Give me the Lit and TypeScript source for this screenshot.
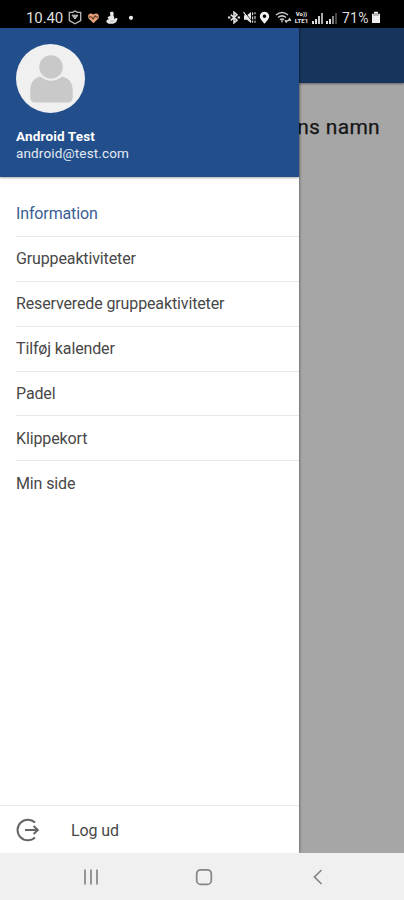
import { LitElement, html, css } from "lit";
import { customElement, property } from "lit/decorators.js";

@customElement("status-bar")
class StatusBar extends LitElement {
  static styles = css`
    :host { display: flex; height: 28px; box-sizing: border-box; padding: 7px 23px 0 26px; background: #000; color: #dedede; font: 400 14px/21px Roboto, sans-serif; justify-content: space-between; }
    .side { display: flex; align-items: center; height: 21px; }
    .time { width: 42px; font-size: 15px; letter-spacing: -0.1px; padding-top: 1px; }
    svg { display: block; flex: none; }
    .gap { margin-left: 5px; }
    .gap-s { margin-left: 3px; }
    .pct { width: 29px; margin-left: 5px; padding-top: 1px; letter-spacing: 0.2px; white-space: nowrap; }
    .lte { width: 15px; margin-left: 2px; display: flex; flex-direction: column; align-items: center; font-size: 6px; line-height: 6.5px; font-weight: 900; }
  `;
  bars(dim: boolean) {
    return html`<svg class="gap-s" width="11" height="12" viewBox="0 0 11 12">
      <path d="M0 9h2v3H0zM3 7h2v5H3z" fill="#ddd" />
      <path d="M6 4h2v8H6z" fill=${dim ? "#888" : "#ccc"} />
      <path d="M9 1h2v11H9z" fill=${dim ? "#484848" : "#aaa"} />
    </svg>`;
  }
  render() {
    return html`
      <div class="side">
        <span class="time">10.40</span>
        <svg width="14" height="15" viewBox="0 0 14 15" fill="none" stroke="#bdbdbd" stroke-width="1.3">
          <path d="M1.3 2.4H4.5L7 1l2.5 1.4h3.2v8.2L7 13.8 1.3 10.6z" /><path d="M4 5.2h6L7 9z" fill="#aaa" stroke-width="1" />
        </svg>
        <svg class="gap" width="13" height="12" viewBox="0 0 13 12">
          <path d="M6.5 11.2 1.6 6.5C-.6 3.8 3-.8 6.5 2.6 10-.8 13.6 3.8 11.4 6.5z" fill="#e5a077" />
          <path d="M1.4 5h3.2l1.5 2 2-3.2L9.2 5h2.4" fill="none" stroke="#5a3423" stroke-width="1.1" />
        </svg>
        <svg class="gap" width="14" height="14" viewBox="0 0 14 14" fill="#e8e8e8">
          <path d="M5 1.2 7.4.6 8.8 2 8.4 4.6 9.2 6.3v1.9l2-1.4 1.4.9-1.5 3.5-3 1.6H3.6L1.3 11l.6-2.2 2-.4L2.6 6.7l1-1.2 1.7-.6z" />
          <path d="m5 9.6 1.8.9 2.4-.8" stroke="#888" fill="none" stroke-width=".6" />
        </svg>
        <svg width="24" height="12" viewBox="0 0 24 12"><circle cx="12" cy="5.8" r="2.1" fill="#eee" /></svg>
      </div>
      <div class="side">
        <svg width="12" height="13" viewBox="0 0 12 13" fill="none" stroke="#e0e0e0" stroke-width="1.6">
          <path d="m2.8 3.6 6.2 5.6-3 2.6V1.2l3 2.6-6.2 5.6" /><path d="M0 6.5h2.4M9.6 6.5H12" stroke-width="2" />
        </svg>
        <svg class="gap-s" width="13" height="13" viewBox="0 0 13 13">
          <path d="M1 4.3h3L8 1v11L4 8.7H1z" fill="#e8e8e8" /><path d="M.6 1.2 8 10.8" stroke="#e8e8e8" stroke-width="1.3" /><path d="M1.9 1.2 8.4 9.6" stroke="#000" stroke-width=".7" />
          <path d="M9.6 1.3v3M9.6 5.6v2.8M9.6 9.5v2.3M12 1.3v2M12 5v3.2M12 9.7v2" stroke="#ccc" stroke-width="1.2" />
        </svg>
        <svg class="gap-s" width="11" height="13" viewBox="0 0 11 13"><path fill-rule="evenodd" d="M5.5.7A4.7 4.7 0 0 0 .8 5.2C.8 8.2 5.5 12.6 5.5 12.6S10.2 8.2 10.2 5.2A4.7 4.7 0 0 0 5.5.7zm0 2.7a1.8 1.8 0 1 1 0 3.6 1.8 1.8 0 0 1 0-3.6z" fill="#f2f2f2" /></svg>
        <svg class="gap" width="17" height="13" viewBox="0 0 17 13" fill="none" stroke="#ccc" stroke-width="1.5">
          <path d="M1 4q6-4.8 12 0M3 6.5q4-3.3 8 0M5 8.8q2-1.7 4 0M7 9.2v2" /><path d="m10 9.2 1.3 1.8 1.3-1.8M13.2 10l1.3-2 1.3 2" stroke-width="1.5" />
        </svg>
        <span class="lte"><span>Vo))</span><span>LTE1</span></span>
        ${this.bars(false)}${this.bars(true)}
        <span class="pct">71%</span>
        <svg width="10" height="13" viewBox="0 0 10 13"><path d="M3 .8h4v1.7H3zM1 2.7h8v9.4H1z" fill="#eee" /><path d="M2 4h6" stroke="#888" /></svg>
      </div>`;
  }
}

@customElement("drawer-header")
class DrawerHeader extends LitElement {
  static styles = css`
    :host { display: block; box-sizing: border-box; height: 149px; padding: 16px 16px 0; background: #224f8b; color: #fff; font: 13.5px/16.5px Roboto, sans-serif; box-shadow: 0 1px 2px #0005; }
    svg { display: block; }
    .name { margin-top: 15px; font-weight: 700; letter-spacing: 0.16px; }
    .name, .mail { white-space: nowrap; }
    .mail { color: #e4eaf3; letter-spacing: 0.15px; }
  `;
  render() {
    return html`<svg width="70" height="69" viewBox="0 0 70 69">
        <circle cx="34.5" cy="34.5" r="34.5" fill="#f0f0f0" />
        <circle cx="35" cy="23" r="11.8" fill="#c9c9c9" />
        <path d="M24 32.5Q35 41 46 32.5Q56.5 35 56.5 46V53Q56.5 58.5 51 58.5H19Q14 58.5 14 53V46Q14 35 24 32.5z" transform="translate(.2)" fill="#c9c9c9" />
      </svg>
      <div class="name">Android Test</div><div class="mail">android@test.com</div>`;
  }
}

@customElement("drawer-menu")
class DrawerMenu extends LitElement {
  @property({ type: Array }) items: string[] = [];
  static styles = css`
    :host { display: block; flex: 1; padding: 15px 0 0 16px; font: 16px/20px Roboto, sans-serif; letter-spacing: -0.13px; color: #484848; }
    .row { box-sizing: border-box; height: 44.9px; display: flex; align-items: center; padding-top: 0.8px; border-bottom: 1px solid #e9e9e9; }
    .row:last-child { border-color: transparent; }
    .active { color: #3c5d94; }
  `;
  render() {
    return this.items.map((t, i) => html`<div class="row ${i === 0 ? "active" : ""}">${t}</div>`);
  }
}

@customElement("navigation-bar")
class NavigationBar extends LitElement {
  static styles = css`
    :host { display: flex; height: 47px; background: #f0f0f0; align-items: center; padding-left: 83px; }
    svg { display: block; fill: none; stroke: #858585; stroke-width: 1.7; }
    .home { margin: 0 99px 0 96px; }
  `;
  render() {
    return html`
      <svg width="16" height="18" viewBox="0 0 16 18"><path d="M2 1.5v15M8 1.5v15M14 1.5v15" /></svg>
      <svg class="home" width="18" height="18" viewBox="0 0 18 18"><rect x="1.7" y="1.8" width="14.6" height="14.6" rx="4" /></svg>
      <svg width="12" height="18" viewBox="0 0 12 18"><path d="M9.5 2 2.5 9l7 7" /></svg>`;
  }
}

@customElement("app-root")
class AppRoot extends LitElement {
  static styles = css`
    :host { display: flex; flex-direction: column; width: 404px; height: 900px; overflow: hidden; background: #fff; }
    .body { flex: 1; display: flex; min-height: 0; }
    .drawer { width: 299px; display: flex; flex-direction: column; background: #fff; z-index: 1; box-shadow: 0 0 3px #0009; clip-path: inset(0 -6px 0 0); }
    .page { flex: 1; min-width: 0; background: #a6a6a6; }
    .bar { height: 55px; background: #17355c; box-shadow: 0 1px 2px #0006; }
    .title { display: flex; justify-content: flex-end; padding: 31px 24px 0 0; font: 400 21px/27px Roboto, sans-serif; letter-spacing: 0.3px; -webkit-text-stroke: 0.25px #161616; color: #161616; white-space: nowrap; }
    .logout { box-sizing: border-box; height: 48px; border-top: 1px solid #ebebeb; display: flex; align-items: center; gap: 31px; padding: 1px 0 0 16px; font: 16px/20px Roboto, sans-serif; letter-spacing: -0.1px; color: #484848; }
    .logout span { padding-top: 1px; }
    .logout svg { display: block; fill: none; stroke: #666; stroke-width: 2; }
  `;
  render() {
    return html`
      <status-bar></status-bar>
      <div class="body">
        <div class="drawer">
          <drawer-header></drawer-header>
          <drawer-menu .items=${["Information", "Gruppeaktiviteter", "Reserverede gruppeaktiviteter", "Tilføj kalender", "Padel", "Klippekort", "Min side"]}></drawer-menu>
          <div class="logout">
            <svg width="24" height="24" viewBox="0 0 24 24"><path d="M19 4.6A10.3 10.3 0 1 0 19 19.4M9 12h12M17.6 8l4.2 4-4.2 4" /></svg>
            <span>Log ud</span>
          </div>
        </div>
        <div class="page"><div class="bar"></div><div class="title">ns namn</div></div>
      </div>
      <navigation-bar></navigation-bar>`;
  }
}
